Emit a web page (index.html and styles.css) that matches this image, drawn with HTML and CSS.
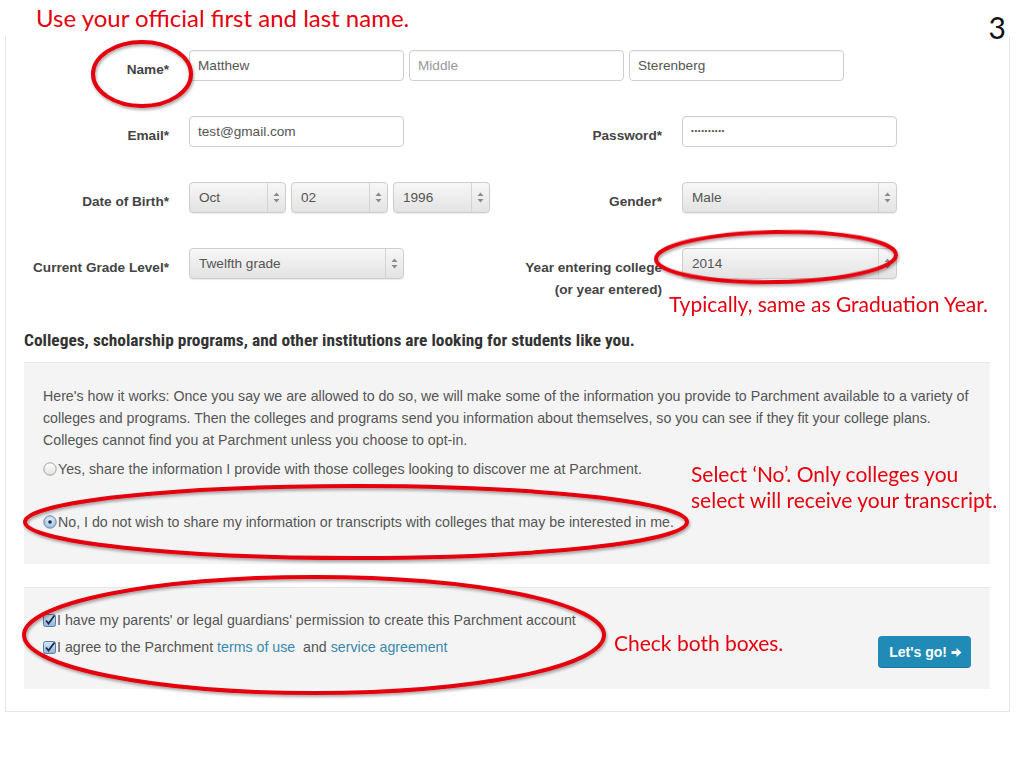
FILE: index.html
```html
<!DOCTYPE html>
<html lang="en">

<head>
    <meta charset="UTF-8">
    <meta name="viewport" content="width=device-width, initial-scale=1.0">
    <title>Parchment account - slide 3</title>
    <link rel="stylesheet" href="styles.css">
</head>

<body>
    <div class="slide">
        <div class="slide-head">
            <p class="tip">Use your official first and last name.</p>
            <span class="page-num">3</span>
        </div>

        <div class="frame">
            <div class="row">
                <label class="lbl">Name*</label>
                <div class="names">
                    <div class="field">Matthew</div>
                    <div class="field placeholder">Middle</div>
                    <div class="field">Sterenberg</div>
                </div>
            </div>

            <div class="row">
                <label class="lbl">Email*</label>
                <div class="field">test@gmail.com</div>
                <label class="lbl">Password*</label>
                <div class="field dots">••••••••••</div>
            </div>

            <div class="row">
                <label class="lbl">Date of Birth*</label>
                <div class="dob">
                    <div class="select"><span>Oct</span><i class="arrows"><svg width="7" height="11" viewBox="0 0 7 11"><path d="M3.5 0.5 L6.5 4 L0.5 4 Z M3.5 10.5 L6.5 7 L0.5 7 Z" fill="#8a8a8a"/></svg></i></div>
                    <div class="select"><span>02</span><i class="arrows"><svg width="7" height="11" viewBox="0 0 7 11"><path d="M3.5 0.5 L6.5 4 L0.5 4 Z M3.5 10.5 L6.5 7 L0.5 7 Z" fill="#8a8a8a"/></svg></i></div>
                    <div class="select"><span>1996</span><i class="arrows"><svg width="7" height="11" viewBox="0 0 7 11"><path d="M3.5 0.5 L6.5 4 L0.5 4 Z M3.5 10.5 L6.5 7 L0.5 7 Z" fill="#8a8a8a"/></svg></i></div>
                </div>
                <label class="lbl">Gender*</label>
                <div class="select"><span>Male</span><i class="arrows"><svg width="7" height="11" viewBox="0 0 7 11"><path d="M3.5 0.5 L6.5 4 L0.5 4 Z M3.5 10.5 L6.5 7 L0.5 7 Z" fill="#8a8a8a"/></svg></i></div>
            </div>

            <div class="row">
                <label class="lbl">Current Grade Level*</label>
                <div class="select"><span>Twelfth grade</span><i class="arrows"><svg width="7" height="11" viewBox="0 0 7 11"><path d="M3.5 0.5 L6.5 4 L0.5 4 Z M3.5 10.5 L6.5 7 L0.5 7 Z" fill="#8a8a8a"/></svg></i></div>
                <label class="lbl">Year entering college<br>(or year entered)</label>
                <div class="select"><span>2014</span><i class="arrows"><svg width="7" height="11" viewBox="0 0 7 11"><path d="M3.5 0.5 L6.5 4 L0.5 4 Z M3.5 10.5 L6.5 7 L0.5 7 Z" fill="#8a8a8a"/></svg></i></div>
            </div>

            <h2 class="section-title">Colleges, scholarship programs, and other institutions are looking for students like you.</h2>

            <div class="well optin">
                <p>Here's how it works: Once you say we are allowed to do so, we will make some of the information you provide to Parchment available to a variety of<br>
                colleges and programs. Then the colleges and programs send you information about themselves, so you can see if they fit your college plans.<br>
                Colleges cannot find you at Parchment unless you choose to opt-in.</p>
                <div class="choice yes">
                    <svg class="radio" width="14" height="14" viewBox="0 0 14 14"><defs><linearGradient id="rw" x1="0" y1="0" x2="0" y2="1"><stop offset="0" stop-color="#ffffff"/><stop offset="1" stop-color="#e2e2e2"/></linearGradient></defs><circle cx="7" cy="7" r="6.2" fill="url(#rw)" stroke="#9a9a9a" stroke-width="0.9"/></svg>
                    <span>Yes, share the information I provide with those colleges looking to discover me at Parchment.</span>
                </div>
                <div class="choice no">
                    <svg class="radio" width="14" height="14" viewBox="0 0 14 14"><defs><radialGradient id="rb" cx="0.5" cy="0.35" r="0.7"><stop offset="0" stop-color="#e6f1fb"/><stop offset="1" stop-color="#8fb7de"/></radialGradient></defs><circle cx="7" cy="7" r="6.2" fill="url(#rb)" stroke="#5f7fa8" stroke-width="0.9"/><circle cx="7" cy="7" r="1.8" fill="#1b2b45"/></svg>
                    <span>No, I do not wish to share my information or transcripts with colleges that may be interested in me.</span>
                </div>
            </div>

            <div class="well agree">
                <div class="checks">
                    <div class="check">
                        <svg class="box" width="13" height="13" viewBox="0 0 13 13"><defs><linearGradient id="cb" x1="0" y1="0" x2="0" y2="1"><stop offset="0" stop-color="#d9e9f8"/><stop offset="1" stop-color="#8cb4dc"/></linearGradient></defs><rect x="0.5" y="0.5" width="12" height="12" rx="2" fill="url(#cb)" stroke="#5a7ea8"/><path d="M3 6.5 L5.5 9.5 L11.5 1.5" fill="none" stroke="#1a2a48" stroke-width="1.8"/></svg>
                        <span>I have my parents' or legal guardians' permission to create this Parchment account</span>
                    </div>
                    <div class="check">
                        <svg class="box" width="13" height="13" viewBox="0 0 13 13"><rect x="0.5" y="0.5" width="12" height="12" rx="2" fill="url(#cb)" stroke="#5a7ea8"/><path d="M3 6.5 L5.5 9.5 L11.5 1.5" fill="none" stroke="#1a2a48" stroke-width="1.8"/></svg>
                        <span>I agree to the Parchment <a href="#">terms of use</a>&nbsp; and <a href="#">service agreement</a></span>
                    </div>
                </div>
                <button class="go">Let's go! <svg width="11" height="11" viewBox="0 0 11 11"><path d="M0.5 4 H5.5 V1 L10.5 5.5 L5.5 10 V7 H0.5 Z" fill="#fff"/></svg></button>
            </div>
        </div>

        <!-- red annotations drawn over the screenshot -->
        <div class="notes">
            <svg class="rings" width="1024" height="768" viewBox="0 0 1024 768">
                <defs>
                    <filter id="sh" x="-10%" y="-20%" width="120%" height="140%">
                        <feDropShadow dx="1" dy="2" stdDeviation="1.5" flood-color="#000" flood-opacity="0.35"/>
                    </filter>
                </defs>
                <g fill="none" stroke="#e4000f" stroke-width="4" filter="url(#sh)">
                    <ellipse cx="142" cy="74" rx="49" ry="32"/>
                    <ellipse cx="776" cy="257" rx="120" ry="25" transform="rotate(-1 776 257)"/>
                    <ellipse cx="356" cy="522" rx="331" ry="36"/>
                    <ellipse cx="314" cy="635" rx="290" ry="58"/>
                </g>
            </svg>
            <p class="note grad">Typically, same as Graduation Year.</p>
            <p class="note pick">Select ‘No’. Only colleges you<br>select will receive your transcript.</p>
            <p class="note both">Check both boxes.</p>
        </div>
    </div>
</body>

</html>
```

FILE: styles.css
```css
body {
    margin: 0;
    background: #fff;
}

.slide {
    position: relative;
    width: 1024px;
    height: 768px;
    overflow: hidden;
    font-family: "Liberation Sans", Arial, sans-serif;
    color: #555;
}

.slide-head {
    display: flex;
    justify-content: space-between;
    height: 36px;
}
.tip {
    margin: 0;
    padding: 4px 0 0 36px;
    font-family: Lato, "Open Sans", sans-serif;
    font-size: 24px;
    line-height: 28px;
    color: #e4000f;
}
.page-num {
    padding: 12px 18px 0 0;
    font-family: Lato, "Open Sans", sans-serif;
    font-size: 30px;
    line-height: 30px;
    color: #111;
}

.frame {
    margin-left: 5px;
    width: 1005px;
    box-sizing: border-box;
    border: 1px solid #e6e6e6;
    border-top: 0;
    padding: 14px 0 22px 0;
}

.row {
    display: grid;
    grid-template-columns: 163px 215px 238px 215px;
    column-gap: 20px;
    align-items: start;
    margin-bottom: 35px;
}
.row:nth-child(4) {
    margin-bottom: 28px;
}
.lbl {
    padding-top: 9px;
    text-align: right;
    font-size: 13.6px;
    line-height: 22px;
    font-weight: bold;
    color: #444;
}

.names {
    grid-column: 2 / 5;
    display: flex;
    gap: 5px;
}
.names .field {
    width: 215px;
}

.field {
    box-sizing: border-box;
    height: 31px;
    padding: 0 8px;
    border: 1px solid #cfcfcf;
    border-radius: 4px;
    background: #fff;
    font-size: 13.6px;
    line-height: 29px;
    color: #555;
    box-shadow: inset 0 1px 1px rgba(0, 0, 0, 0.04);
}
.field.placeholder {
    color: #999;
}
.field.dots {
    font-size: 8px;
    letter-spacing: 0.6px;
    line-height: 27px;
}

.dob {
    display: flex;
    gap: 5px;
}
.dob .select {
    flex: none;
    width: 97px;
}

.select {
    box-sizing: border-box;
    height: 31px;
    display: flex;
    justify-content: space-between;
    border: 1px solid #cdcdcd;
    border-radius: 4px;
    background: linear-gradient(#f7f7f7, #e3e3e3);
    box-shadow: 0 1px 1px rgba(0, 0, 0, 0.08);
    font-size: 13.6px;
    line-height: 29px;
    color: #555;
}
.select span {
    padding-left: 9px;
}
.select .arrows {
    width: 17px;
    display: flex;
    align-items: center;
    justify-content: center;
    border-left: 1px solid #d4d4d4;
}

.section-title {
    margin: 0 0 11px 18px;
    font-family: "Liberation Sans Narrow", "Roboto Condensed", "Liberation Sans", sans-serif;
    font-stretch: condensed;
    font-size: 17.4px;
    line-height: 22px;
    color: #333;
}

.well {
    margin: 0 19px 0 18px;
    background: #f4f4f4;
    border-top: 1px solid #e8e8e8;
    font-size: 14.2px;
    color: #555;
}

.optin {
    padding: 22px 19px 31px 19px;
    margin-bottom: 23px;
}
.optin p {
    margin: 0 0 7px 0;
    line-height: 22px;
    white-space: nowrap;
}
.choice {
    display: flex;
    align-items: center;
    gap: 1px;
    line-height: 22px;
}
.choice.no {
    margin-top: 31px;
}

.agree {
    display: flex;
    justify-content: space-between;
    align-items: flex-start;
    padding: 19px 19px 21px 19px;
}
.check {
    display: flex;
    align-items: center;
    gap: 1px;
    line-height: 27px;
}
.check a {
    color: #3a87ad;
    text-decoration: none;
}
.go {
    margin-top: 29px;
    height: 32px;
    padding: 0 9px 0 11px;
    border: 0;
    border-radius: 4px;
    background: #1f8bb6;
    box-shadow: inset 0 -1px 0 rgba(0, 0, 0, 0.15);
    color: #fff;
    font-family: "Liberation Sans", Arial, sans-serif;
    font-size: 14px;
    font-weight: bold;
    display: flex;
    align-items: center;
    gap: 4px;
}

.notes {
    position: absolute;
    left: 0;
    top: 0;
    width: 1024px;
    height: 768px;
    pointer-events: none;
}
.rings {
    position: absolute;
    left: 0;
    top: 0;
}
.note {
    position: absolute;
    margin: 0;
    font-family: Lato, "Open Sans", sans-serif;
    font-size: 21px;
    line-height: 26px;
    color: #e4000f;
}
.note.grad {
    left: 669px;
    top: 291px;
}
.note.pick {
    left: 691px;
    top: 461px;
}
.note.both {
    left: 614px;
    top: 630px;
}
```
